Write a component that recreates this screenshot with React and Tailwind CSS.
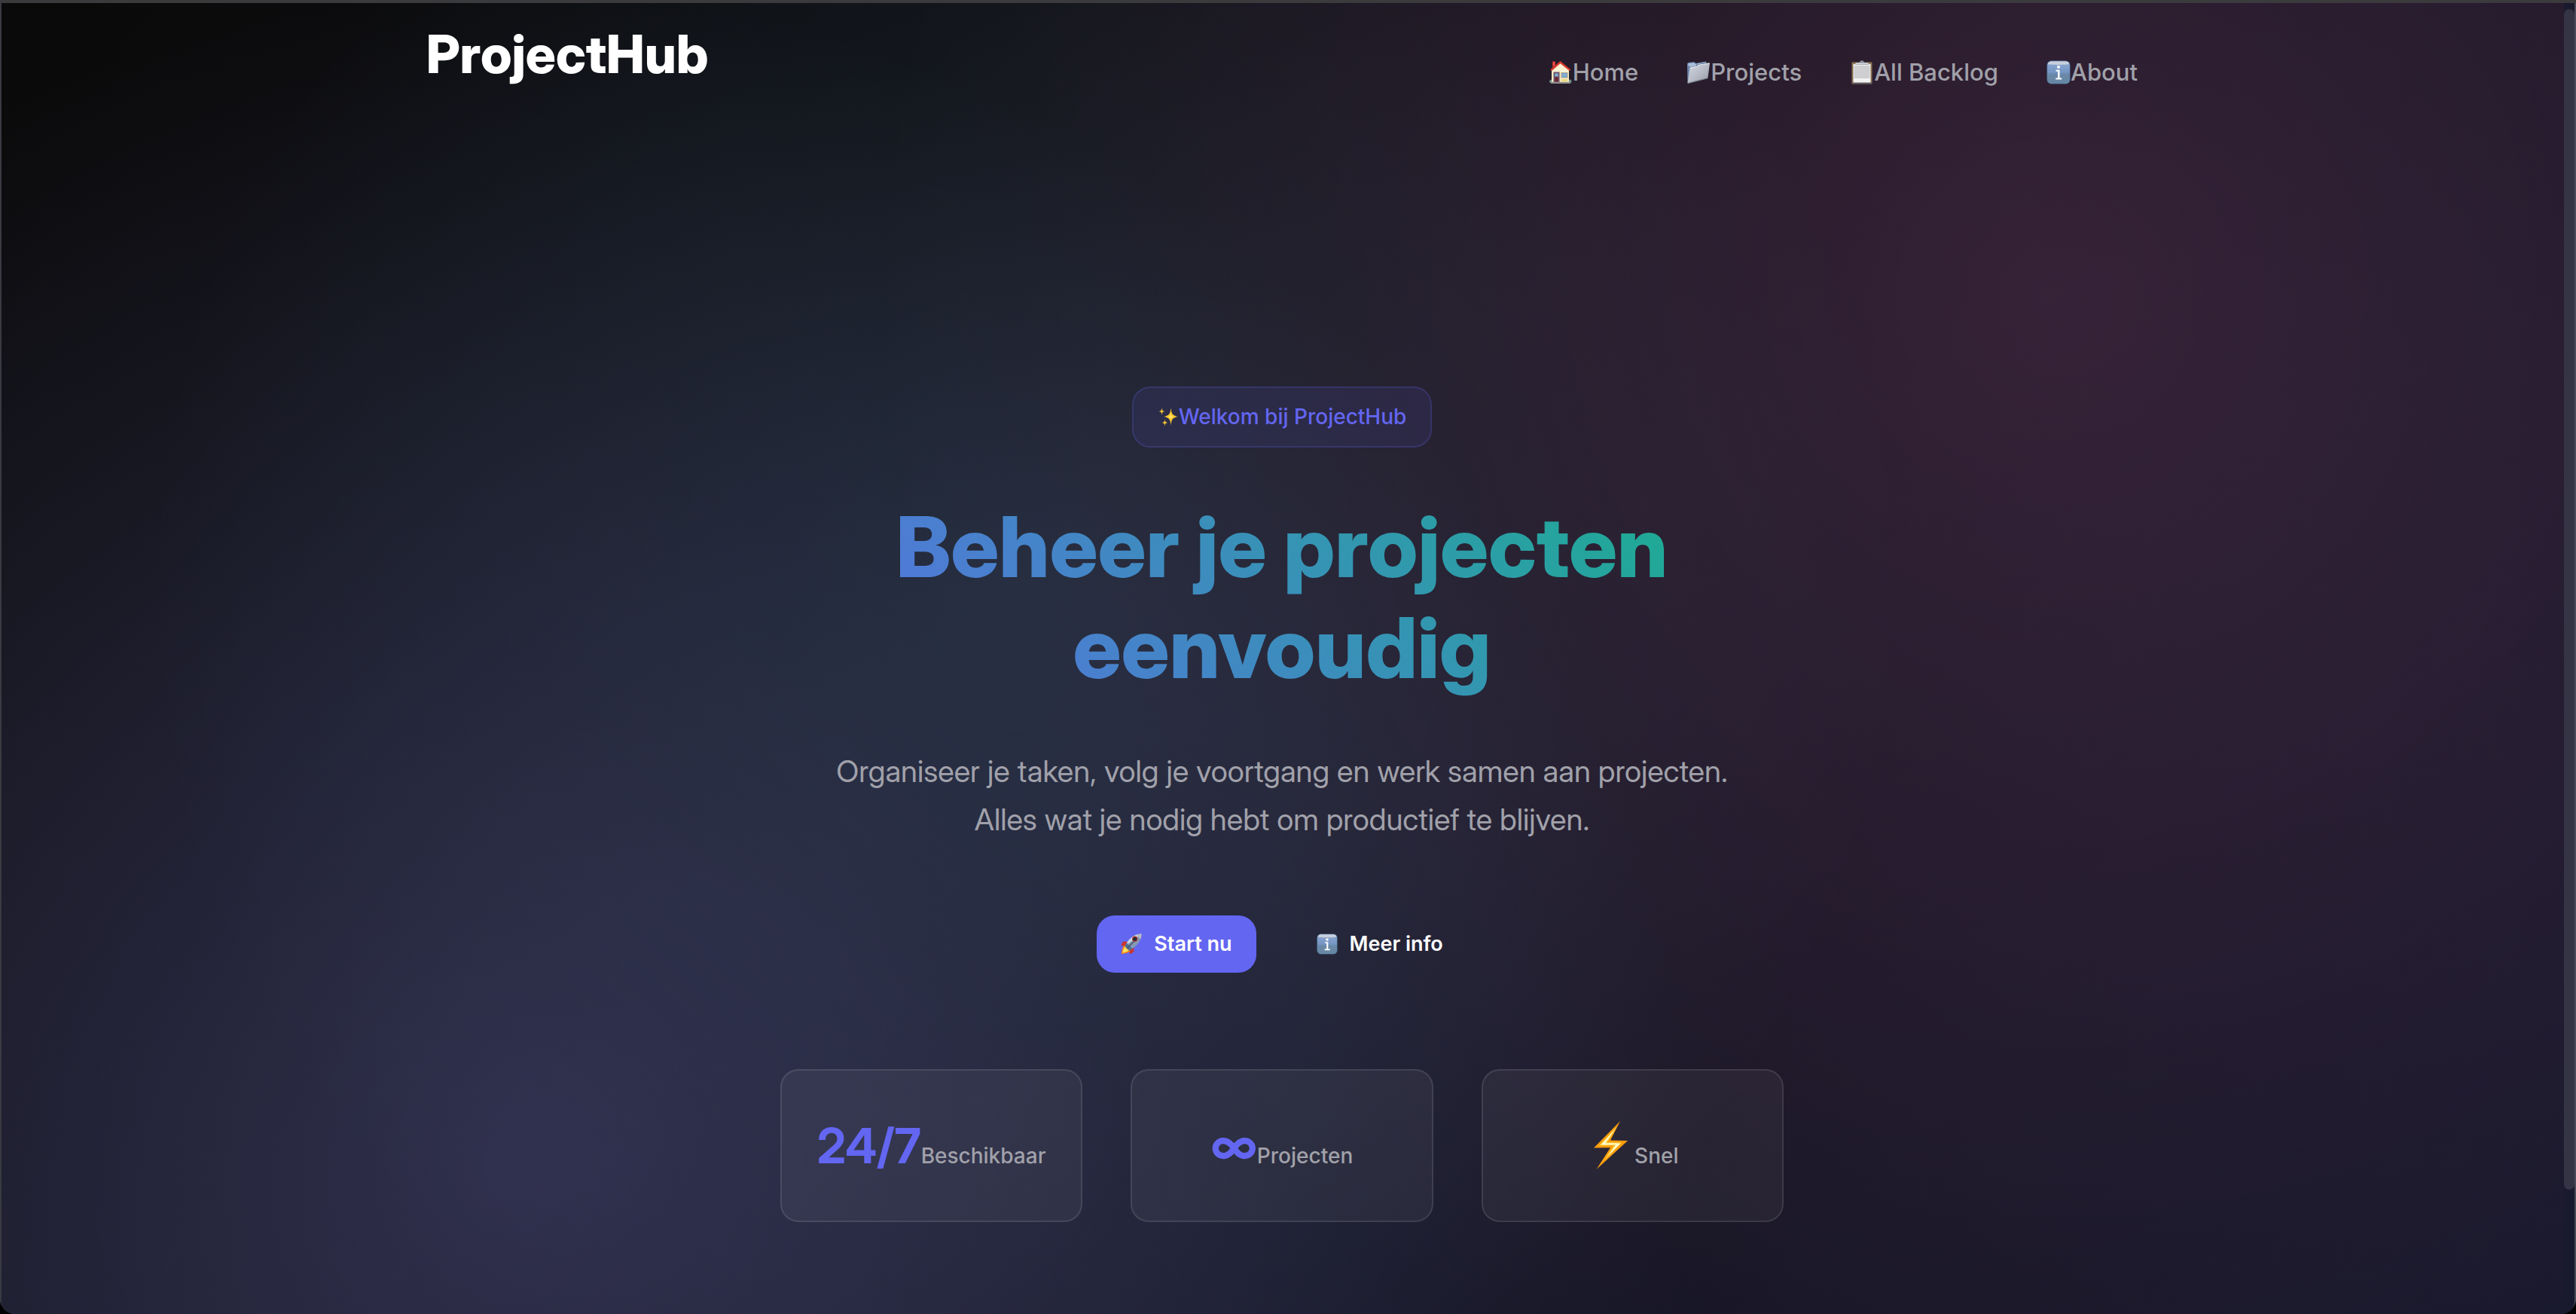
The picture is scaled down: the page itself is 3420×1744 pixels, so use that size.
const HouseIcon = ({ className }) => (
  <svg viewBox="0 0 32 32" className={className} aria-hidden="true">
    <path d="M5 1.5h4v5L5 10z" fill="#c9302c" />
    <path d="M6 2.5h2v4l-2 1.5z" fill="#e4544c" />
    <path d="M4 13 16 3l11 10v16H4z" fill="#f3e9c4" />
    <path d="M16 5 26 14v2H6v-2z" fill="#f9f2d2" />
    <path d="M15.500 1 29.500 12.500 27.800 14 15.500 4.200 4 14 2.200 12.500z" fill="#d8392c" />
    <rect x="6.500" y="15.500" width="8" height="13.500" fill="#6d5568" />
    <rect x="8.500" y="17.500" width="4" height="4" fill="#7fb0dc" />
    <rect x="8.500" y="22.500" width="4" height="6" fill="#6b2328" />
    <rect x="16.500" y="16" width="9" height="7.500" fill="#b7a98a" />
    <rect x="17.500" y="17" width="7" height="5.500" fill="#6f9fce" />
    <path d="M21 17v5.500M17.500 19.500h7" stroke="#9fc3e4" strokeWidth=".7" />
    <path d="M1 29c-.5-2 1-3.300 3-3.300V30H2zM27 25.700c2.600-.6 4 1.300 3.500 3.300L29 30h-2z" fill="#6f8d86" />
    <path d="M3 28.700h26V31H3z" fill="#8f8b8a" />
    <path d="M17 25.500h8v2h-8z" fill="#ecd566" />
  </svg>
)

const FolderIcon = ({ className }) => (
  <svg viewBox="0 0 32 32" className={className} aria-hidden="true">
    <defs>
      <linearGradient id="folderFront" x1="0" y1="0" x2="1" y2="1">
        <stop offset="0" stopColor="#d4d7de" />
        <stop offset=".5" stopColor="#b7bcc8" />
        <stop offset="1" stopColor="#95989f" />
      </linearGradient>
    </defs>
    <path d="M1 4.500 2.500 3l8-.8L12.500 4 26 1.500l1 2L28 6 5 28 1.500 30z" fill="#6f88ac" />
    <path d="M2 6 3 4l7-.8L12 5l14-2.500v2L5 9z" fill="#a9bcd8" />
    <path d="M13 5.800 27 3l.5 3-14 2.500z" fill="#4e5f7c" />
    <path d="M4.500 10.500 7 9l6.500-1 1.500-2 15-2.500c.7 0 1 .4.9 1L28.500 23c-.1.9-.6 1.300-1.500 1.500L2.500 30.800c-.7.100-1-.2-.9-.8z" fill="url(#folderFront)" />
    <path d="M4.500 10.500 14 8.500l1.500-2L30.700 4" fill="none" stroke="#eef2f8" strokeWidth=".8" />
    <path d="M1.800 30.300 27.500 23.800" stroke="#6d7788" strokeWidth=".9" />
  </svg>
)

const ClipboardIcon = ({ className }) => (
  <svg viewBox="0 0 32 32" className={className} aria-hidden="true">
    <rect x="2.500" y="2.500" width="27" height="29" rx="1.200" fill="#8a7350" />
    <rect x="2.500" y="29.500" width="27" height="2" rx=".8" fill="#5d5a63" />
    <rect x="4.500" y="5" width="23" height="24.500" fill="#f2f2f2" />
    <rect x="5.500" y="7" width="21" height="17" fill="#cfcfd1" />
    <path d="M8 3h4c1 0 1.500-.5 1.800-1.200a2.300 2.300 0 0 1 4.400 0C18.500 2.500 19 3 20 3h4l1.500 3h-19z" fill="#a7abb5" />
    <path d="M7.500 4.500h17" stroke="#dfe3ea" strokeWidth=".9" />
    <circle cx="16" cy="2.200" r=".8" fill="#5f626c" />
  </svg>
)

const InfoIcon = ({ className, id }) => (
  <svg viewBox="0 0 32 32" className={className} aria-hidden="true">
    <defs>
      <linearGradient id={id} x1="0" y1="0" x2="0" y2="1">
        <stop offset="0" stopColor="#8ea9d2" />
        <stop offset=".5" stopColor="#7595c4" />
        <stop offset=".6" stopColor="#6a88a8" />
        <stop offset="1" stopColor="#6688a4" />
      </linearGradient>
    </defs>
    <rect x=".5" y=".5" width="31" height="31" rx="6" fill="#4c7396" />
    <rect x="1.200" y="1.200" width="29.600" height="29.600" rx="5.500" fill={`url(#${id})`} />
    <path d="M6.500 1.500h19c2.600 0 4.300 1.500 4.500 3.500-3 1.200-25 1.200-28 0 .2-2 1.900-3.500 4.500-3.500z" fill="#c8cfdc" />
    <circle cx="16" cy="9" r="2" fill="#fff" />
    <path d="M12.500 12.800h5v10.700h2.700v1.900h-8v-1.900h2.900v-8.800h-2.600z" fill="#fff" />
  </svg>
)

const SparklesIcon = ({ className }) => (
  <svg viewBox="0 0 28 28" className={className} aria-hidden="true">
    <g fill="#f7c431">
      <path d="M17.500 1c.7 8 2 10.500 9.500 12-7.500 1.500-8.800 4-9.500 12-.7-8-2-10.500-9.500-12 7.500-1.500 8.800-4 9.500-12z" />
      <path d="M5.500 1c.4 3.600 1 4.500 4 5-3 .5-3.600 1.400-4 5-.4-3.600-1-4.500-4-5 3-.5 3.600-1.400 4-5z" />
      <path d="M9.500 16c.3 3.600 1 4.600 4 5-3 .4-3.700 1.400-4 5-.3-3.600-1-4.600-4-5 3-.4 3.700-1.400 4-5z" />
    </g>
    <path d="M17.500 8c.5 3.500 1.300 4.500 4.500 5-3.200.5-4 1.500-4.500 5-.5-3.500-1.300-4.500-4.500-5 3.200-.5 4-1.500 4.500-5z" fill="#ffe25a" />
  </svg>
)

const RocketIcon = ({ className }) => (
  <svg viewBox="0 0 28 28" className={className} aria-hidden="true">
    <path d="M9.500 11 4 10.500c-1.500.8-3 3-3.500 5.500l5 .8zM17 18.500l.5 5c-.8 1.500-3 3-5.500 3.500l-1-4.500z" fill="#c8362c" />
    <path d="M4.500 15.500C2.500 17 1.500 21 .8 27.200 7 26.500 11 25.500 12.500 23.500z" fill="#ee7c22" />
    <path d="M5.500 17.500c-1.500 1.300-2.500 4-3.200 8.200 4.200-.7 6.900-1.700 8.200-3.200z" fill="#ffe05a" />
    <path d="M27.500.6C20 .5 13 4.500 8 12.500L5.600 17l5.500 5.500 4.400-2.500C23.500 15 27.600 8 27.500.6z" fill="#8399b5" />
    <path d="M27.500.6C20 .5 13 4.500 8 12.500l-1.200 3L25 2.800z" fill="#c9d7e6" />
    <path d="M8 12.500 5.600 17l5.500 5.500 4.400-2.500z" fill="#4f7396" />
    <path d="m8 20 12-12" stroke="#41546f" strokeWidth="1.500" />
    <path d="M27.500.6c-2.300 0-4.300.3-6.500 1 1 2.300 3 4.200 5.500 5.400.7-2 1-4.100 1-6.400z" fill="#b5bcc6" />
    <circle cx="18.700" cy="7.200" r="3.700" fill="#b23a31" />
    <circle cx="18.700" cy="7.200" r="2.500" fill="#222a3a" />
  </svg>
)

const BoltIcon = ({ className }) => (
  <svg viewBox="0 0 64 64" className={className} aria-hidden="true">
    <path d="M45 0 10 35.500l22-.3L13.500 64 55 26l-23-.5z" fill="#f99d0d" />
    <path d="M41 7 17 32.500l20-.4L23 53l24-24.500-19.500-.3z" fill="#ffd23c" />
    <path d="M38.500 10.500 19.500 31.500l20-.3L29 46l16.500-16.500-20.200-.2z" fill="#fffbd0" />
  </svg>
)

const navLinks = [
  { label: 'Home', icon: <HouseIcon className="size-8" /> },
  { label: 'Projects', icon: <FolderIcon className="size-8" /> },
  { label: 'All Backlog', icon: <ClipboardIcon className="size-8" /> },
  { label: 'About', icon: <InfoIcon id="infoNav" className="size-8" /> },
]

const StatCard = ({ value, label }) => (
  <li className="flex items-baseline justify-center rounded-3xl border-2 border-white/10 bg-white/5 py-12 text-[28px] font-medium text-[#a1a1aa]">
    <strong className="text-[64px] leading-[103px] font-bold text-[#6366f1] font-['Inter_Display','Inter','Liberation_Sans',sans-serif]">{value}</strong>
    <span>{label}</span>
  </li>
)

export default function App() {
  return (
    <div className="min-h-screen flex flex-col bg-black font-['Inter','Liberation_Sans',sans-serif] text-white">
      <div className="h-1 bg-[#3b3b3e]" />
      <div className="flex flex-1 overflow-hidden rounded-b-[20px] bg-[#1a1a2e]">
        <div className="flex-1 flex flex-col shadow-[inset_2px_0_0_#3a3a42] bg-no-repeat bg-[length:100%_111%] bg-[image:radial-gradient(circle_at_20%_80%,rgba(120,119,198,0.3)_0%,transparent_50%),radial-gradient(circle_at_80%_20%,rgba(255,119,198,0.15)_0%,transparent_50%),radial-gradient(circle_at_40%_40%,rgba(120,219,255,0.1)_0%,transparent_50%),linear-gradient(135deg,#0a0a0a_0%,#1a1a2e_100%)]">
          <header className="w-full max-w-[2400px] mx-auto px-16 flex justify-between">
            <a href="#" className="mt-3 text-[70px] leading-[112px] font-extrabold font-['Inter_Display','Inter','Liberation_Sans',sans-serif]">ProjectHub</a>
            <nav aria-label="Hoofdmenu" className="mt-[66px] flex items-center gap-16 h-[51px]">
              {navLinks.map((link) => (
                <a key={link.label} href="#" className="flex items-center text-[31px] leading-[51px] font-medium text-[#a1a1aa]">
                  {link.icon}
                  {link.label}
                </a>
              ))}
            </nav>
          </header>

          <main className="flex-1 flex flex-col items-center pt-[385px] pb-[121px] text-center">
            <p className="flex items-center rounded-3xl border-2 border-[#6366f1]/20 bg-[#6366f1]/10 px-8 py-4 text-[28px] leading-[45px] font-medium text-[#6366f1]">
              <SparklesIcon className="size-7" />
              Welkom bij ProjectHub
            </p>
            <h1 className="mt-16 w-full max-w-[1600px] bg-[linear-gradient(45deg,#6366f1_0%,#10b981_100%)] bg-clip-text text-transparent text-[112px] leading-[134px] font-extrabold font-['Inter_Display','Inter','Liberation_Sans',sans-serif]">
              Beheer je projecten <br />
              eenvoudig
            </h1>
            <p className="mt-[66px] text-[40px] leading-[64px] text-[#a1a1aa] font-['Inter_Display','Inter','Liberation_Sans',sans-serif]">
              Organiseer je taken, volg je voortgang en werk samen aan projecten.
              <br />
              Alles wat je nodig hebt om productief te blijven.
            </p>
            <div className="mt-[95px] flex gap-12">
              <button type="button" className="flex items-center gap-4 h-[76px] px-8 rounded-3xl bg-[#6366f1] text-[27px] font-semibold">
                <RocketIcon className="size-7" />
                Start nu
              </button>
              <button type="button" className="flex items-center gap-4 h-[76px] px-8 rounded-3xl text-[27px] font-semibold">
                <InfoIcon id="infoMore" className="size-7" />
                Meer info
              </button>
            </div>
            <ul className="mt-32 w-full max-w-[1332px] grid grid-cols-3 gap-16">
              <StatCard value="24/7" label="Beschikbaar" />
              <StatCard value="∞" label="Projecten" />
              <StatCard value={<BoltIcon className="inline size-16 align-[-8px]" />} label="Snel" />
            </ul>
          </main>
        </div>
        <div className="w-4 flex flex-col pt-2 bg-[#1a1a2e] border-r-2 border-[#4a4a58] rounded-br-[20px]" aria-hidden="true">
          <div className="grow-[1568] rounded-full bg-[#343444]" />
          <div className="grow-[165]" />
        </div>
      </div>
    </div>
  )
}
